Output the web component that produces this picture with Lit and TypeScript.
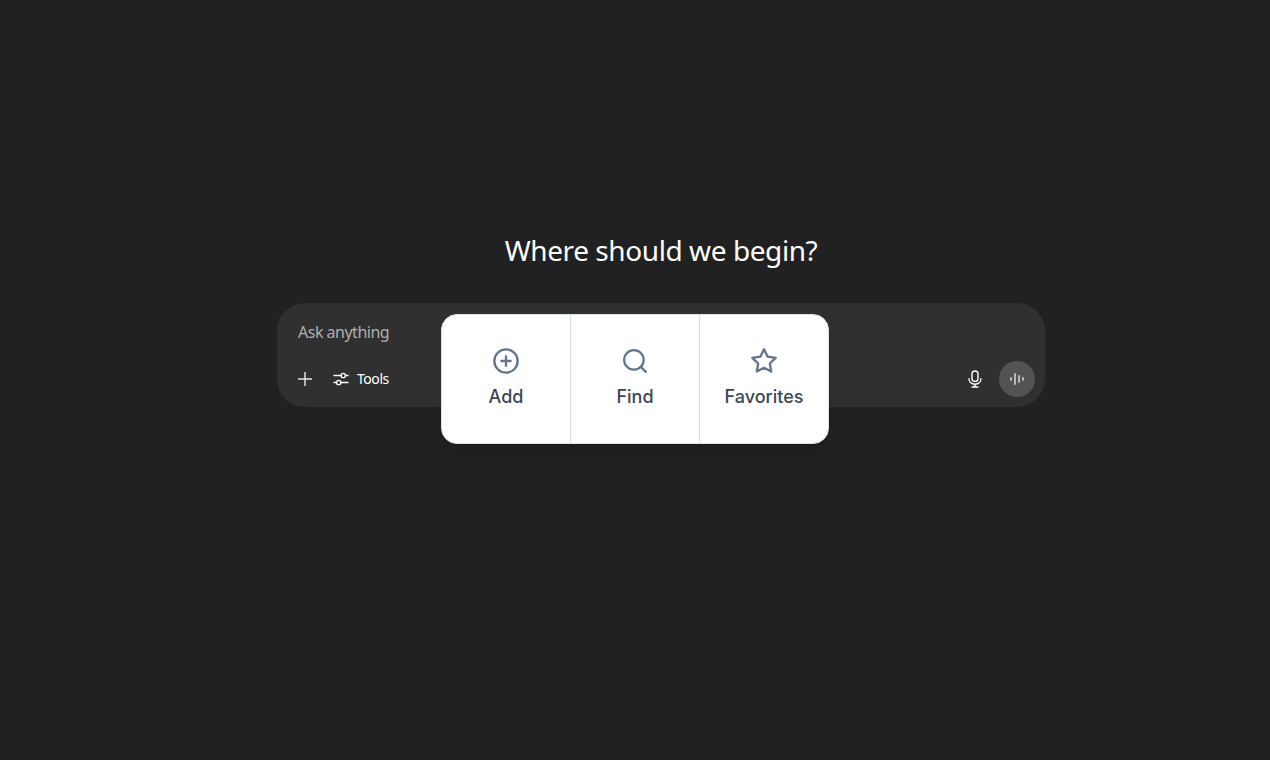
import { LitElement, html, css } from "lit";
import { customElement } from "lit/decorators.js";

@customElement("app-root")
export class AppRoot extends LitElement {
  static styles = css`
    :host { display: block; width: 100%; height: 760px; background: #212121; overflow: hidden; }
    .page { height: 760px; display: flex; flex-direction: column; align-items: center; box-sizing: border-box; padding: 233px 0 0 52px; position: relative; font-family: "Noto Sans", "Open Sans", sans-serif; }
    h1 { margin: 0 0 30px; height: 40px; line-height: 35px; font-size: 28px; font-weight: 400; color: #fff; letter-spacing: -0.42px; }
    .composer { width: 768px; height: 104px; box-sizing: border-box; background: #303030; border-radius: 28px; padding: 18px 10px 10px 21px; display: flex; flex-direction: column; justify-content: space-between; position: relative; }
    .placeholder { font-size: 16px; line-height: 22px; color: #afafaf; letter-spacing: -0.5px; }
    .bar { display: flex; align-items: center; height: 36px; }
    .plus { width: 14px; height: 14px; color: #e8e8e8; margin-right: 21px; }
    .tools { display: flex; align-items: center; gap: 8px; color: #fff; font-size: 14px; letter-spacing: -0.45px; }
    .tools svg { width: 16px; height: 16px; }
    .tools span { position: relative; top: -1px; }
    .spacer { flex: 1; }
    .mic { width: 18px; height: 18px; margin-right: 15px; color: #fff; }
    .voice { width: 36px; height: 36px; border-radius: 50%; background: #535353; display: flex; align-items: center; justify-content: center; }
    .voice svg { width: 16px; height: 16px; color: #c4c4c4; }
    .menu { position: absolute; left: 441px; top: 314px; width: 388px; height: 130px; box-sizing: border-box; display: flex; background: #fff; border: 1px solid #dbe3ec; border-radius: 16px; box-shadow: 0 10px 15px -3px rgba(0,0,0,.1), 0 4px 6px -4px rgba(0,0,0,.1); overflow: hidden; font-family: Inter, sans-serif; }
    .item { flex: 1; display: flex; flex-direction: column; align-items: center; justify-content: center; gap: 8px; border-right: 1px solid #d5dde8; color: #3a4654; font-size: 18px; font-weight: 500; line-height: 28px; }
    .item:last-child { border-right: none; }
    .item svg { width: 28px; height: 28px; color: #64748b; }
    .find { width: 26px !important; height: 26px !important; margin: 1px 0; }
  `;

  render() {
    return html`<div class="page">
      <h1>Where should we begin?</h1>
      <div class="composer">
        <div class="placeholder">Ask anything</div>
        <div class="bar">
          <svg class="plus" viewBox="0 0 14 14" fill="none" stroke="currentColor" stroke-width="1.4" stroke-linecap="round"><path d="M7 .5v13M.5 7h13"/></svg>
          <div class="tools">
            <svg viewBox="0 0 16 16" fill="none" stroke="currentColor" stroke-width="1.3" stroke-linecap="round"><path d="M1 4.5h7M12.5 4.5H15M1 11.5h2.5M8 11.5h7"/><circle cx="10.2" cy="4.5" r="2.2"/><circle cx="5.7" cy="11.5" r="2.2"/></svg>
            <span>Tools</span>
          </div>
          <div class="spacer"></div>
          <svg class="mic" viewBox="0 0 18 18" fill="none" stroke="currentColor" stroke-width="1.4" stroke-linecap="round"><rect x="6" y="1" width="6" height="10.4" rx="3"/><path d="M3 8.6c0 3.4 2.6 5.6 6 5.6s6-2.2 6-5.6M9 14.2V17M6 17h6"/></svg>
          <div class="voice">
            <svg viewBox="0 0 16 16" fill="none" stroke="currentColor" stroke-width="1.8" stroke-linecap="round"><path d="M2 7v2M6 3v10M10 5v6M14 7v2"/></svg>
          </div>
        </div>
      </div>
      <div class="menu">
        <div class="item">
          <svg viewBox="0 0 24 24" fill="none" stroke="currentColor" stroke-width="2" stroke-linecap="round" stroke-linejoin="round"><circle cx="12" cy="12" r="10"/><path d="M8 12h8M12 8v8"/></svg>
          <span>Add</span>
        </div>
        <div class="item">
          <svg class="find" viewBox="0 0 24 24" fill="none" stroke="currentColor" stroke-width="2.1" stroke-linecap="round" stroke-linejoin="round"><circle cx="11" cy="11" r="9"/><path d="m22 22-4.6-4.6"/></svg>
          <span>Find</span>
        </div>
        <div class="item">
          <svg viewBox="0 0 24 24" fill="none" stroke="currentColor" stroke-width="2" stroke-linecap="round" stroke-linejoin="round"><path d="M12 2l3.09 6.26L22 9.27l-5 4.87 1.18 6.88L12 17.77l-6.18 3.25L7 14.14 2 9.27l6.91-1.01L12 2z"/></svg>
          <span>Favorites</span>
        </div>
      </div>
    </div>`;
  }
}
